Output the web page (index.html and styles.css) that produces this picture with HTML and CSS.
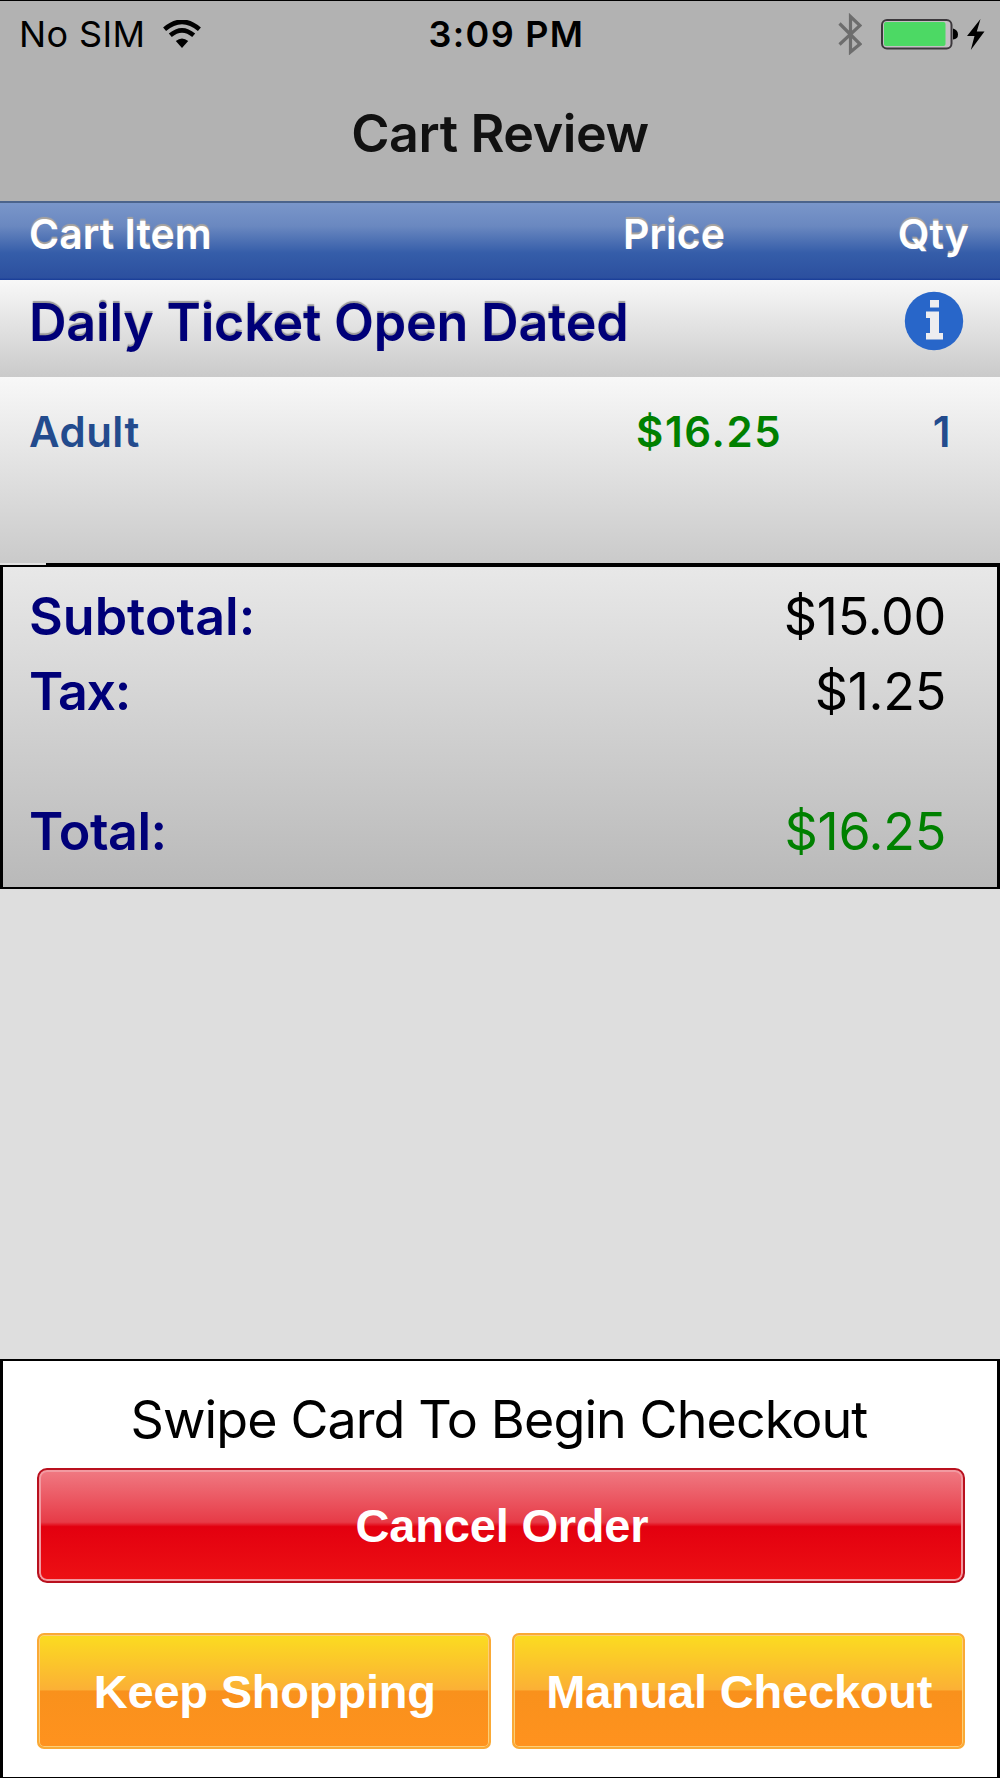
FILE: index.html
```html
<!DOCTYPE html>
<html lang="en">
<head>
<meta charset="utf-8">
<title>Cart Review</title>
<link rel="stylesheet" href="styles.css">
</head>
<body>
<main class="screen">
  <header class="top">
    <div class="status">
      <div class="status-left">
        <span class="carrier">No SIM</span>
        <svg class="wifi" viewBox="0 0 38 29" width="38" height="29">
          <g fill="none" stroke="#000" stroke-width="4.6"><path d="M1.6 9.2Q19-5.6 36.4 9.2"/><path d="M7.3 15.3Q19 5.4 30.700 15.3"/></g>
          <path d="M12.800 21Q19 16 25.200 21L19 28Z"/>
        </svg>
      </div>
      <span class="clock">3:09 PM</span>
      <div class="status-right">
        <svg class="bluetooth" viewBox="0 0 24 42" width="24" height="42"><path d="M1.500 10.500L22 31L12.500 39V3.500L22 12.500L1.500 31.500" fill="none" stroke="#6d6d6d" stroke-width="3.200"/></svg>
        <svg class="battery" viewBox="0 0 78 31" width="78" height="31"><rect x="1" y="1" width="69.500" height="28.500" rx="5" fill="#c4bfc4" stroke="#3c383c" stroke-width="2"/><rect x="3" y="3" width="61.500" height="24" rx="2" fill="#4cd964"/><path d="M72 9.500Q77 11 77 15.500T72 20.500Z"/></svg>
        <svg class="bolt" viewBox="0 0 18 31" width="18" height="31"><path d="M13.500 0L0 17H7.500L3.800 31L17.500 12.500H9.800Z"/></svg>
      </div>
    </div>
    <h1 class="title">Cart Review</h1>
  </header>
  <div class="columns grid">
    <span>Cart Item</span><span>Price</span><span>Qty</span>
  </div>
  <div class="product">
    <h2>Daily Ticket Open Dated</h2>
    <svg class="info" viewBox="0 0 60 60" width="60" height="60"><circle cx="30" cy="30" r="29.200" fill="#2866c9"/><path d="M26 9h9v7.500h-9zM22 20.500h13V42h4v6.500H22V42h4V27h-4z" fill="#ededf0"/></svg>
  </div>
  <div class="line-item grid">
    <span>Adult</span><span class="price">$16.25</span><span>1</span>
  </div>
  <div class="separator"></div>
  <section class="totals">
    <div class="row"><span class="label">Subtotal:</span><span class="value">$15.00</span></div>
    <div class="row tax"><span class="label">Tax:</span><span class="value">$1.25</span></div>
    <div class="row grand"><span class="label">Total:</span><span class="value">$16.25</span></div>
  </section>
  <footer class="checkout">
    <p class="prompt">Swipe Card To Begin Checkout</p>
    <button class="btn cancel">Cancel Order</button>
    <div class="actions">
      <button class="btn primary">Keep Shopping</button>
      <button class="btn primary">Manual Checkout</button>
    </div>
  </footer>
</main>
</body>
</html>
```
FILE: styles.css
```css
* { box-sizing: border-box; }
body { margin: 0; background: #dedede; font-family: Inter, "Liberation Sans", sans-serif; }
h1, h2, p { margin: 0; }
.screen { width: 1000px; height: 1778px; display: flex; flex-direction: column; background: #dedede; overflow: hidden; }
.top { height: 203px; background: #b2b2b2; border-top: 1px solid #000; border-bottom: 2px solid #4c648c; }
.status { height: 66px; padding: 0 15px 0 19px; display: grid; grid-template-columns: 1fr auto 1fr; align-items: center; font-size: 36px; line-height: 66px; color: #000; }
.status-left, .status-right { display: flex; align-items: center; }
.status-left { gap: 17px; letter-spacing: 0.4px; }
.status-right { justify-content: flex-end; }
.clock { font-weight: 600; letter-spacing: 1.3px; padding-left: 9px; }
.battery { margin-left: 19px; }
.bolt { margin-left: 8px; }
.title { font-size: 52px; line-height: 134px; font-weight: 600; text-align: center; letter-spacing: -0.4px; color: #111; }
.grid { display: grid; grid-template-columns: 594px 1fr auto; }
.columns { height: 77px; padding: 0 31px 0 29px; background: linear-gradient(#7a96ca 0%, #6a88c0 30%, #355da9 65%, #2c509f 97%, #173b98 100%); color: #fff; font-size: 41px; font-weight: 600; line-height: 63px; text-shadow: 0 -2px 1px #aaa59e; }
.product { height: 97px; padding: 11px 36px 0 29px; display: flex; justify-content: space-between; background: linear-gradient(#f8f8f8, #cacaca); }
.product h2 { font-size: 52px; font-weight: 600; line-height: 63px; letter-spacing: -0.2px; color: #000078; text-shadow: 0 -2px 1px #999; }
.line-item { height: 186px; padding: 24px 49px 0 29px; background: linear-gradient(#f8f8f8, #cacaca); font-size: 42px; font-weight: 600; line-height: 62px; letter-spacing: 0.5px; color: #234b8d; }
.price { color: #008000; padding-left: 13px; letter-spacing: 1.6px; }
.separator { height: 2px; border-left: 46px solid #e2e2e2; background: #000; }
.totals { height: 324px; padding: 12px 51px 0 26px; border: 3px solid #000; border-width: 2px 3px; background: linear-gradient(#e8e8e8, #b9b9b9); font-size: 52px; }
.row { display: flex; justify-content: space-between; height: 75px; line-height: 75px; }
.grand { margin-top: 65px; letter-spacing: -0.5px; }
.label { font-weight: 600; color: #000078; }
.tax .label { letter-spacing: -1.4px; }
.value { color: #000; letter-spacing: -0.3px; }
.grand .value { color: #008000; }
.checkout { height: 419px; margin-top: auto; padding: 27px 32px 0 34px; border: 3px solid #000; border-width: 2px 3px 1px; background: #fff; }
.prompt { height: 80px; padding-right: 4px; font-size: 52px; line-height: 64px; letter-spacing: -0.9px; text-align: center; white-space: nowrap; color: #000; }
.btn { display: block; padding: 0 0 0 2px; font: 700 47px "Liberation Sans", Arial, sans-serif; letter-spacing: -0.2px; color: #fff; }
.cancel { width: 928px; height: 115px; border: 2px solid #b9101e; border-radius: 10px; background: linear-gradient(#f07a83 0%, #e73b47 47%, #e3000f 51%, #ed1014 100%); box-shadow: inset 0 0 0 2px #f29aa1; }
.actions { display: flex; gap: 21px; margin-top: 50px; }
.primary { width: 453.5px; height: 116px; border: 2px solid #faa935; border-radius: 7px; background: linear-gradient(#fbdc20 0%, #fbb036 49%, #f9911c 50%, #ff921e 100%); box-shadow: inset 0 0 0 1px #fccf78; }
```
